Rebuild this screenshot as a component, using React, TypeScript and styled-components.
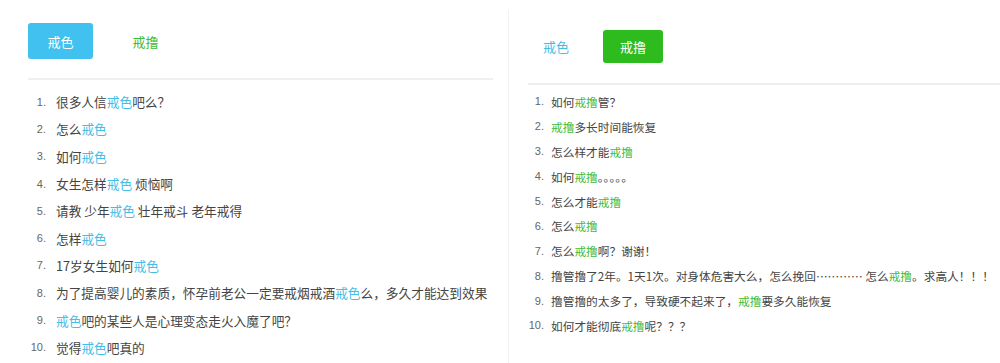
import React from 'react'
import styled, { createGlobalStyle } from 'styled-components'

const BLUE = '#45bde6'
const GREEN = '#3fbb34'

const GlobalStyle = createGlobalStyle`
  body {
    margin: 0;
    background: #fff;
    font-family: "Noto Sans CJK SC", "Liberation Sans", sans-serif;
  }
`

const Page = styled.div`
  display: flex;
  width: 1000px;
  height: 363px;
  overflow: hidden;
`

const Panel = styled.div<{ $side: 'left' | 'right' }>`
  display: flex;
  flex-direction: column;
  box-sizing: border-box;
  ${({ $side }) =>
    $side === 'left'
      ? `
    width: 508px;
    padding: 23px 15px 0 28px;
  `
      : `
    flex: 1;
    margin-top: 10px;
    border-left: 1px solid #f1f1f1;
    padding: 18px 0 0 19px;
  `}
`

const Tabs = styled.div<{ $gap: number }>`
  display: flex;
  align-items: center;
  gap: ${({ $gap }) => $gap}px;
  height: 36px;
  margin-bottom: 19px;
`

const Tab = styled.div<{ $active?: boolean; $color: string; $w: number; $h: number }>`
  display: flex;
  align-items: center;
  justify-content: center;
  width: ${({ $w }) => $w}px;
  height: ${({ $h }) => $h}px;
  border-radius: 3px;
  font-size: 13px;
  background: ${({ $active, $color }) => ($active ? $color : 'transparent')};
  color: ${({ $active, $color }) => ($active ? '#fff' : $color)};
`

const Divider = styled.div`
  height: 2px;
  background: #efefef;
`

const List = styled.ol<{ $row: number; $size: number; $top: number }>`
  list-style: none;
  margin: 0;
  padding: ${({ $top }) => $top}px 0 0;
  font-size: ${({ $size }) => $size}px;
  color: #444;
  li {
    display: flex;
    align-items: center;
    height: ${({ $row }) => $row}px;
    white-space: pre;
  }
`

const Num = styled.span<{ $w: number; $gap: number }>`
  flex: none;
  width: ${({ $w }) => $w}px;
  margin-right: ${({ $gap }) => $gap}px;
  text-align: right;
  font-family: "Liberation Sans", sans-serif;
  font-size: 11px;
  color: #666;
`

const Text = styled.span``

const Hl = styled.span<{ $color: string }>`
  color: ${({ $color }) => $color};
`

const left: string[][] = [
  ['很多人信', '戒色', '吧么？'],
  ['怎么', '戒色'],
  ['如何', '戒色'],
  ['女生怎样', '戒色', ' 烦恼啊'],
  ['请教 少年', '戒色', ' 壮年戒斗 老年戒得'],
  ['怎样', '戒色'],
  ['17岁女生如何', '戒色'],
  ['为了提高婴儿的素质，怀孕前老公一定要戒烟戒酒', '戒色', '么，多久才能达到效果'],
  ['', '戒色', '吧的某些人是心理变态走火入魔了吧？'],
  ['觉得', '戒色', '吧真的'],
]

const right: string[][] = [
  ['如何', '戒撸', '管？'],
  ['', '戒撸', '多长时间能恢复'],
  ['怎么样才能', '戒撸'],
  ['如何', '戒撸', '。。。。。'],
  ['怎么才能', '戒撸'],
  ['怎么', '戒撸'],
  ['怎么', '戒撸', '啊？谢谢！'],
  ['撸管撸了2年。1天1次。对身体危害大么，怎么挽回………… 怎么', '戒撸', '。求高人！！！'],
  ['撸管撸的太多了，导致硬不起来了，', '戒撸', '要多久能恢复'],
  ['如何才能彻底', '戒撸', '呢？？？'],
]

const renderItems = (items: string[][], color: string, numW: number, gap: number) =>
  items.map((it, i) => (
    <li key={i}>
      <Num $w={numW} $gap={gap}>{i + 1}.</Num>
      <Text>
        {it[0]}
        <Hl $color={color}>{it[1]}</Hl>
        {it[2]}
      </Text>
    </li>
  ))

export default function App() {
  return (
    <Page>
      <GlobalStyle />
      <Panel $side="left">
        <Tabs $gap={20}>
          <Tab $active $color="#40c1f0" $w={65} $h={36}>戒色</Tab>
          <Tab $color={GREEN} $w={65} $h={36}>戒撸</Tab>
        </Tabs>
        <Divider />
        <List $row={27.3} $size={12.7} $top={8}>
          {renderItems(left, BLUE, 18, 10)}
        </List>
      </Panel>
      <Panel $side="right">
        <Tabs $gap={19}>
          <Tab $color={BLUE} $w={56} $h={33}>戒色</Tab>
          <Tab $active $color="#2dbb1e" $w={60} $h={33}>戒撸</Tab>
        </Tabs>
        <Divider />
        <List $row={24.9} $size={11.7} $top={4}>
          {renderItems(right, GREEN, 16, 7)}
        </List>
      </Panel>
    </Page>
  )
}
